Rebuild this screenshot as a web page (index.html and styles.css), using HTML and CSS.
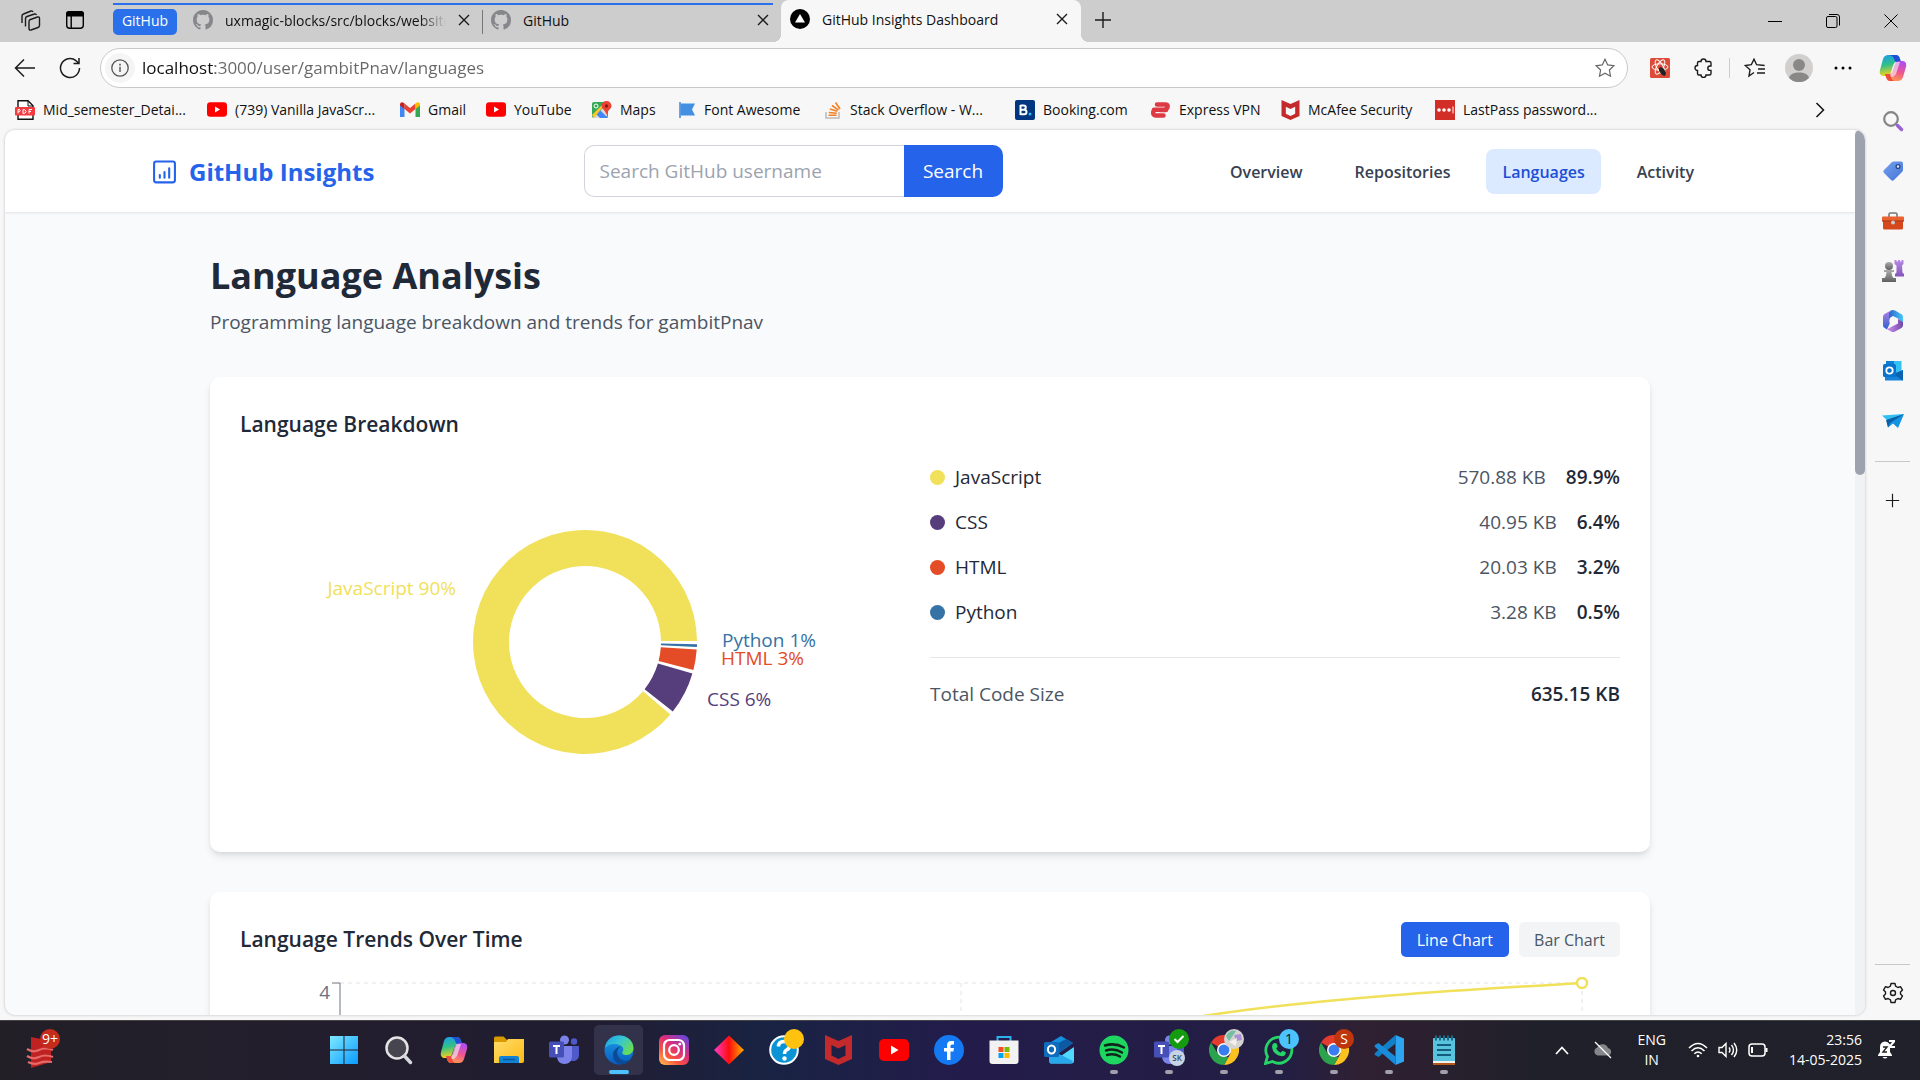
FILE: index.html
```html
<!DOCTYPE html>
<html lang="en">
<head>
<meta charset="utf-8">
<title>GitHub Insights Dashboard</title>
<link rel="stylesheet" href="styles.css">
</head>
<body>
<svg class="defs" width="0" height="0" aria-hidden="true">
  <defs>
    <linearGradient id="cpA" x1="0" y1="0" x2="0.2" y2="1"><stop offset="0" stop-color="#1c9bf0"/><stop offset=".5" stop-color="#2ec08a"/><stop offset="1" stop-color="#f3d21b"/></linearGradient>
    <linearGradient id="cpB" x1="0.6" y1="0" x2="0.3" y2="1"><stop offset="0" stop-color="#b04cf0"/><stop offset=".5" stop-color="#f0568f"/><stop offset="1" stop-color="#ffa04d"/></linearGradient>
    <linearGradient id="win" x1="0" y1="0" x2="1" y2="1"><stop offset="0" stop-color="#7de9ff"/><stop offset="1" stop-color="#0a9bff"/></linearGradient>
    <linearGradient id="fold" x1="0" y1="0" x2="1" y2="1"><stop offset="0" stop-color="#ffdc6b"/><stop offset="1" stop-color="#fdbb15"/></linearGradient>
    <linearGradient id="edgeA" x1="0" y1="0" x2="1" y2=".6"><stop offset="0" stop-color="#1f9de0"/><stop offset=".5" stop-color="#35c5d5"/><stop offset="1" stop-color="#66dd55"/></linearGradient>
    <linearGradient id="edgeB" x1="0" y1="0" x2="0" y2="1"><stop offset="0" stop-color="#1b9ce4"/><stop offset="1" stop-color="#0a5cc0"/></linearGradient>
    <linearGradient id="insta" x1="0" y1="1" x2=".8" y2="0"><stop offset="0" stop-color="#ffc850"/><stop offset=".35" stop-color="#f9533f"/><stop offset=".65" stop-color="#d82d7e"/><stop offset="1" stop-color="#6f45d8"/></linearGradient>
    <linearGradient id="dia" x1="0" y1="0" x2="1" y2="0"><stop offset="0" stop-color="#ff3ccf"/><stop offset=".5" stop-color="#ff0d0d"/><stop offset="1" stop-color="#ffb000"/></linearGradient>
    <linearGradient id="tag" x1="0" y1="0" x2="1" y2="1"><stop offset="0" stop-color="#74a2ee"/><stop offset="1" stop-color="#4472d6"/></linearGradient>
    <linearGradient id="rook" x1="0" y1="0" x2="0" y2="1"><stop offset="0" stop-color="#b98be8"/><stop offset="1" stop-color="#8255b8"/></linearGradient>
    <linearGradient id="pawn" x1="0" y1="0" x2="0" y2="1"><stop offset="0" stop-color="#adadad"/><stop offset="1" stop-color="#5f5f5f"/></linearGradient>
    <linearGradient id="mA" x1="0" y1="0" x2="0" y2="1"><stop offset="0" stop-color="#b77fe6"/><stop offset="1" stop-color="#2c62d0"/></linearGradient>
    <linearGradient id="mB" x1="0" y1="0" x2="1" y2="0"><stop offset="0" stop-color="#2f64cc"/><stop offset="1" stop-color="#45c8f5"/></linearGradient>
    <linearGradient id="mC" x1="0" y1="0" x2="1" y2="0"><stop offset="0" stop-color="#cf92ee"/><stop offset="1" stop-color="#7048a8"/></linearGradient>
    <symbol id="github" viewBox="0 0 16 16"><path fill="#85878a" d="M8 0C3.58 0 0 3.58 0 8c0 3.54 2.29 6.53 5.47 7.59.4.07.55-.17.55-.38 0-.19-.01-.82-.01-1.49-2.01.37-2.53-.49-2.69-.94-.09-.23-.48-.94-.82-1.13-.28-.15-.68-.52-.01-.53.63-.01 1.08.58 1.23.82.72 1.21 1.87.87 2.33.66.07-.52.28-.87.51-1.07-1.78-.2-3.64-.89-3.64-3.95 0-.87.31-1.59.82-2.15-.08-.2-.36-1.02.08-2.12 0 0 .67-.21 2.2.82.64-.18 1.32-.27 2-.27s1.36.09 2 .27c1.53-1.04 2.2-.82 2.2-.82.44 1.1.16 1.92.08 2.12.51.56.82 1.27.82 2.15 0 3.07-1.87 3.75-3.65 3.95.29.25.54.73.54 1.48 0 1.07-.01 1.93-.01 2.2 0 .21.15.46.55.38A8.01 8.01 0 0 0 16 8c0-4.42-3.58-8-8-8z"/></symbol>
    <symbol id="close" viewBox="0 0 12 12"><path d="M1 1l10 10M11 1L1 11" stroke="#1b1b1b" stroke-width="1.4" fill="none"/></symbol>
    <symbol id="plus" viewBox="0 0 18 18"><path d="M9 1v16M1 9h16" stroke="#1b1b1b" stroke-width="1.4" fill="none"/></symbol>
    <symbol id="youtube" viewBox="0 0 30 22"><rect width="30" height="22" rx="5" fill="#f00"/><path d="M12 6.500v9l7.500-4.500z" fill="#fff"/></symbol>
    <symbol id="copilot" viewBox="0 0 28 28"><path d="M9 1h8c2 0 3 1 4 4l1 3h-4c-2 0-3 1-4 4l-2 6c-1 3-2 4-4 4H5c-3 0-5-2-4-6L4 5c1-3 3-4 5-4z" fill="url(#cpA)"/><path d="M10 1h7c2 0 3 1 4 4l1 3h-5c-1 0-2-4-3-5s-2-2-4-2z" fill="#2050d8"/><path d="M19 27h-8c-2 0-3-1-4-4l-1-3h4c2 0 3-1 4-4l2-6c1-2 2-3 4-3h3c3 0 5 2 4 6l-3 10c-1 3-3 4-5 4z" fill="url(#cpB)"/><path d="M14 12l2-4h5l-4 12-3 3h-5c2-1 3-3 5-11z" fill="#f4eaf6" opacity=".65"/><path d="M6 20h5c1 3 2 7 5 7h-5c-3 0-4-4-5-7z" fill="#ee4c3d"/></symbol>
    <symbol id="mcafee" viewBox="0 0 27 30"><path d="M0 0l13.500 6L27 0v24l-13.500 6L0 24zM6.500 10v10.500l7 3.500 7-3.500V10l-7 3.500z" fill="#c42a2b" fill-rule="evenodd"/></symbol>
    <symbol id="teams" viewBox="0 0 30 30"><circle cx="15.500" cy="5" r="4.500" fill="#7b83eb"/><circle cx="25" cy="6.500" r="3.200" fill="#5059c9"/><path d="M20 11h9c.6 0 1 .4 1 1v8c0 4-3 6-6 6s-5-2-5-5z" fill="#5059c9"/><path d="M8 11h14c.6 0 1 .4 1 1v9c0 5-3 8-7.500 8S8 26 8 21z" fill="#7b83eb"/><rect y="6.500" width="15" height="16" rx="1.500" fill="#464eb8"/><path d="M4 11h7M7.500 11v8" stroke="#fff" stroke-width="2" fill="none"/></symbol>
    <symbol id="outlook" viewBox="0 0 30 30"><path d="M7 7l10-6 12 7-14 10-8-4z" fill="#1490df"/><path d="M11 10l11-6 7 4-16 11z" fill="#0c59a4"/><path d="M30 9v17c0 1.500-1 2.500-2.500 2.500H6L30 12z" fill="#50d9ff"/><path d="M5 14l24 12c-.5 1.500-1 2.500-2.500 2.500H7c-1 0-2-1-2-2z" fill="#28a8ea"/><rect y="7" width="15" height="15" rx="1.500" fill="#0f6cbd"/><ellipse cx="7.500" cy="14.500" rx="3.600" ry="4" stroke="#fff" stroke-width="2" fill="none"/></symbol>
    <symbol id="chrome" viewBox="0 0 30 30"><path d="M15 15L2 7.500A15 15 0 0 1 28 7.500L28.300 8H15z" fill="#e33b2e"/><path d="M28 7.500A15 15 0 0 1 15 30L21.500 18.500 15 8h13.300z" fill="#fcc21f"/><path d="M15 30A15 15 0 0 1 2 7.500L8.700 18.500 15 22h4.500z" fill="#2ba24c"/><circle cx="15" cy="15" r="7" fill="#fff"/><circle cx="15" cy="15" r="5.500" fill="#3a7df0"/></symbol>
    <symbol id="avatar" viewBox="0 0 28 28"><circle cx="14" cy="14" r="14" fill="#d2d0ce"/><circle cx="14" cy="11" r="6" fill="#8a8886"/><path d="M4 24c1-4 5-5.500 10-5.500S23 20 24 24a14 14 0 0 1-20 0z" fill="#8a8886"/></symbol>
  </defs>
</svg>

<header class="tabbar">
  <button class="icon-btn" aria-label="Workspaces"><svg width="22" height="22" viewBox="0 0 22 22" fill="none" stroke="#1b1b1b" stroke-width="1.400"><path d="M2 14V7q0-1.500 1.500-2L11 2q1.500-.4 2 1M5.500 17.500V9.500q0-1.500 1.500-2L14.500 5q1.500-.4 2 1"/><path d="M9 12.500q0-1.500 1.500-2l7-2.500q2-.5 2 1.500v7q0 1.500-1.500 2l-7 2.500q-2 .5-2-1.500z"/></svg></button>
  <button class="icon-btn" aria-label="Tab actions"><svg width="20" height="20" viewBox="0 0 20 20"><rect x="1.700" y="1.700" width="16.600" height="16.600" rx="3" fill="none" stroke="#000" stroke-width="1.400"/><path d="M1 6.500V4q0-3 3-3h12q3 0 3 3v2.500zM5.500 6h1.400v12.500H5.500z"/></svg></button>
  <div class="tab-group">
    <span class="group-name">GitHub</span>
    <div class="tab tab-first"><svg width="20" height="20"><use href="#github"/></svg><span class="tab-title fade">uxmagic-blocks/src/blocks/website</span><button aria-label="Close tab"><svg width="12" height="12"><use href="#close"/></svg></button></div>
    <div class="tab tab-second"><svg width="20" height="20"><use href="#github"/></svg><span class="tab-title">GitHub</span><button aria-label="Close tab"><svg width="12" height="12"><use href="#close"/></svg></button></div>
  </div>
  <div class="tab tab-active"><svg width="20" height="20" viewBox="0 0 20 20"><circle cx="10" cy="10" r="10"/><path d="M10 5l5 8.500H5z" fill="#fff"/></svg><span class="tab-title">GitHub Insights Dashboard</span><button aria-label="Close tab"><svg width="12" height="12"><use href="#close"/></svg></button></div>
  <button class="new-tab" aria-label="New tab"><svg width="18" height="18"><use href="#plus"/></svg></button>
  <div class="window-controls">
    <button aria-label="Minimize"><svg width="14" height="14" viewBox="0 0 14 14"><path d="M0 7.500h14" stroke="#000"/></svg></button>
    <button aria-label="Restore"><svg width="14" height="14" viewBox="0 0 14 14" fill="none" stroke="#000"><rect x=".5" y="2.500" width="10.500" height="11" rx="1.500"/><path d="M3 .5h8q2.500 0 2.500 2.500v8.500"/></svg></button>
    <button aria-label="Close"><svg width="14" height="14" viewBox="0 0 14 14"><path d="M.5.500l13 13M13.500.500l-13 13" stroke="#000"/></svg></button>
  </div>
</header>

<div class="toolbar">
  <button aria-label="Back"><svg width="22" height="22" viewBox="0 0 22 22" fill="none" stroke="#1b1b1b" stroke-width="1.500"><path d="M21 11H2M10 2.500L1.500 11l8.500 8.500"/></svg></button>
  <button aria-label="Refresh"><svg width="22" height="22" viewBox="0 0 22 22" fill="none" stroke="#1b1b1b" stroke-width="1.500"><path d="M20.500 11a9.500 9.500 0 1 1-3.500-7.300L19.500 6M20 1v5.500h-5.500"/></svg></button>
  <div class="address">
    <span class="info"><svg width="18" height="18" viewBox="0 0 18 18"><circle cx="9" cy="9" r="8.200" fill="none" stroke="#555" stroke-width="1.300"/><path d="M8.300 7.800h1.400V13H8.300zM8.200 4.800h1.600v1.600H8.200z" fill="#555"/></svg></span>
    <input class="url" aria-label="Address" value="localhost:3000/user/gambitPnav/languages">
    <button aria-label="Add to favorites"><svg width="20" height="20" viewBox="0 0 20 20"><path d="M10 1.200l2.700 5.700 6.200.8-4.500 4.300 1.100 6.200L10 15.200l-5.500 3 1.100-6.200L1.100 7.700l6.200-.8z" fill="none" stroke="#666" stroke-width="1.200"/></svg></button>
  </div>
  <div class="tools">
    <button aria-label="React tools"><svg width="20" height="20" viewBox="0 0 20 20"><rect width="20" height="20" rx="1.500" fill="#dc4a38"/><g fill="none" stroke="#fff" stroke-width="1"><ellipse cx="10" cy="9" rx="8" ry="3.200"/><ellipse cx="10" cy="9" rx="8" ry="3.200" transform="rotate(60 10 9)"/><ellipse cx="10" cy="9" rx="8" ry="3.200" transform="rotate(120 10 9)"/></g><path d="M9 10l2-1 3 2 2 4-1 3-3-1-3-4z" fill="#222"/></svg></button>
    <button aria-label="Extensions"><svg width="20" height="20" viewBox="0 0 20 20"><path d="M7 3.500a2.500 2.500 0 0 1 5 0h3.500q1.500 0 1.500 1.500v3h-1a2.200 2.200 0 0 0 0 4.400h1V15.500q0 1.500-1.500 1.500H12a2.500 2.500 0 0 1-5 0H5q-1.500 0-1.500-1.500V12.500a2.500 2.500 0 0 1 0-5V5q0-1.500 1.500-1.500z" fill="none" stroke="#1b1b1b" stroke-width="1.400"/></svg></button>
    <span class="sep"></span>
    <button aria-label="Favorites"><svg width="22" height="20" viewBox="0 0 22 20" fill="none" stroke="#1b1b1b" stroke-width="1.400"><path d="M10 14.500l-5 3.500 1-6.200L1.200 7.500l6.100-.8L10 1.200l2.600 5.500 8 .8M14 11h7M13 15h8"/></svg></button>
    <button aria-label="Profile"><svg width="28" height="28"><use href="#avatar"/></svg></button>
    <button aria-label="Settings and more"><svg width="18" height="4" viewBox="0 0 18 4"><circle cx="2" cy="2" r="1.500"/><circle cx="9" cy="2" r="1.500"/><circle cx="16" cy="2" r="1.500"/></svg></button>
  </div>
  <button class="copilot-btn" aria-label="Copilot"><svg width="28" height="28"><use href="#copilot"/></svg></button>
</div>

<div class="browser-body">
  <div class="browser-left">
    <nav class="bookmarks" aria-label="Bookmarks">
      <a href="#"><svg width="20" height="20" viewBox="0 0 20 20"><path d="M4 .7h9l5 5v13.600H3V.7z" fill="#fff" stroke="#111" stroke-width="1.400"/><path d="M13 1v5h5" fill="none" stroke="#111"/><rect y="7" width="20" height="8.500" rx="1" fill="#f33b3f"/><path d="M3 13.500v-4h1.500q1.200 1.200 0 2.300H3M8 9.500v4q3 0 3-2t-3-2M14 13.500v-4h3M14 11.500h2" fill="none" stroke="#fff"/></svg>Mid_semester_Detai...</a>
      <a href="#"><svg width="20" height="15"><use href="#youtube"/></svg>(739) Vanilla JavaScr...</a>
      <a href="#"><svg width="20" height="15" viewBox="0 0 20 15"><path d="M0 2v13h4.500V6z" fill="#4285f4"/><path d="M20 2v13h-4.500V6z" fill="#34a853"/><path d="M4.500 1.500L10 6l5.500-4.500V7L10 11.500 4.500 7z" fill="#ea4335"/><path d="M0 2q1-3 4.500-.5V7L0 3.500z" fill="#c5221f"/><path d="M20 2q-1-3-4.500-.5V7L20 3.500z" fill="#fbbc04"/></svg>Gmail</a>
      <a href="#"><svg width="20" height="15"><use href="#youtube"/></svg>YouTube</a>
      <a href="#"><svg width="20" height="18" viewBox="0 0 20 18"><rect y="1" width="16" height="16" rx="2" fill="#34a853"/><path d="M1 17L15 3v12l-2 2z" fill="#d8dbdf"/><path d="M8 9l8 8h-8L4 13z" fill="#4285f4"/><path d="M0 14L13 1h2L2 17z" fill="#fbc72d"/><circle cx="4" cy="5" r="2" fill="none" stroke="#fff"/><path d="M14.500 0A5 5 0 0 1 19.500 5c0 3-4 4-5 9-1-5-5-6-5-9a5 5 0 0 1 5-5z" fill="#ea4335"/><circle cx="14.500" cy="5" r="1.700" fill="#8b1a11"/></svg>Maps</a>
      <a href="#"><svg width="18" height="18" viewBox="0 0 18 18"><path d="M2.500 2.500H17l-3 6 3 6H2.500z" fill="#4390e2"/><path d="M2 1v16" stroke="#4390e2" stroke-width="1.600"/></svg>Font Awesome</a>
      <a href="#"><svg width="17" height="18" viewBox="0 0 17 18" fill="none"><path d="M1 11v6h13v-6" stroke="#bbb" stroke-width="1.500"/><path d="M3.500 14.300h8M3.800 11.500l8 .8M4.800 8l7.500 2.300M7 4.500l6.500 4.700M10.500 1.500l4.500 6.500" stroke="#f48024" stroke-width="1.600"/></svg>Stack Overflow - W...</a>
      <a href="#"><svg width="20" height="20" viewBox="0 0 20 20"><rect width="20" height="20" rx="2" fill="#013580"/><path d="M5.500 5v10M5.500 5.500h3.200a2 2 0 0 1 0 4.200H5.500M5.500 9.700h3.700a2.300 2.300 0 0 1 0 4.600H5.500" fill="none" stroke="#fff" stroke-width="2"/><circle cx="15" cy="14" r="1.500" fill="#31b7f3"/></svg>Booking.com</a>
      <a href="#"><svg width="20" height="16" viewBox="0 0 20 16" fill="none" stroke="#dd3a44" stroke-width="4.500" stroke-linecap="round"><path d="M6 2.500h9q2 0 1.500 2.500T13 7.800H3M9 8h6M2.500 9q-1 4.500 2 4.500h8"/></svg>Express VPN</a>
      <a href="#"><svg width="19" height="20"><use href="#mcafee"/></svg>McAfee Security</a>
      <a href="#"><svg width="20" height="20" viewBox="0 0 20 20"><rect width="20" height="20" fill="#d32d27"/><g fill="#fff"><circle cx="4" cy="10" r="1.800"/><circle cx="9" cy="10" r="1.800"/><circle cx="14" cy="10" r="1.800"/><path d="M17.500 6.500h1v7h-1z"/></g></svg>LastPass password...</a>
      <button class="more" aria-label="More bookmarks"><svg width="10" height="16" viewBox="0 0 10 16"><path d="M1.500 1l7 7-7 7" fill="none" stroke="#111" stroke-width="1.500"/></svg></button>
    </nav>

    <div class="viewport">
      <div class="page">
        <div class="site-header">
          <div class="site-header-inner">
            <a class="brand" href="#"><svg width="25" height="25" viewBox="0 0 24 24" fill="none" stroke="#2563eb" stroke-width="2" stroke-linecap="round"><rect x="2" y="1.500" width="20" height="20" rx="2"/><path d="M7.500 17v-2.500M12 17v-5.500M16.500 17V8"/></svg>GitHub Insights</a>
            <form class="search" onsubmit="return false"><input type="text" aria-label="GitHub username" placeholder="Search GitHub username"><button>Search</button></form>
            <nav class="site-nav"><a href="#">Overview</a><a href="#">Repositories</a><a class="current" href="#">Languages</a><a href="#">Activity</a></nav>
          </div>
        </div>

        <main class="content">
          <div class="intro">
            <h1>Language Analysis</h1>
            <p>Programming language breakdown and trends for gambitPnav</p>
          </div>

          <section class="card">
            <h2>Language Breakdown</h2>
            <div class="breakdown">
              <svg class="donut" viewBox="-345 -180 690 360" role="img" aria-label="Language share">
                <path fill="#f1e05a" d="M112 -1A112 112 0 1 0 85.400 72.400L58 49.200A76 76 0 1 1 76 -1z"/>
                <path fill="#563d7c" d="M87.800 69.600A112 112 0 0 0 107.400 31.600L72.900 21.500A76 76 0 0 1 59.600 47.200z"/>
                <path fill="#e34c26" d="M108.400 28A112 112 0 0 0 111.700 7.600L75.800 5.200A76 76 0 0 1 73.600 19z"/>
                <path fill="#3572a5" d="M111.900 4.900L112 2.300L76 1.600L75.900 3.300z"/>
                <text x="-129" y="-47" text-anchor="end" fill="#f1e05a">JavaScript 90%</text>
                <text x="122" y="64" fill="#563d7c">CSS 6%</text>
                <text x="136" y="23" fill="#e34c26">HTML 3%</text>
                <text x="137" y="5" fill="#3572a5">Python 1%</text>
              </svg>
              <div class="stats">
                <ul>
                  <li><i class="dot js"></i><span class="name">JavaScript</span><span class="size">570.88 KB</span><strong>89.9%</strong></li>
                  <li><i class="dot css"></i><span class="name">CSS</span><span class="size">40.95 KB</span><strong>6.4%</strong></li>
                  <li><i class="dot html"></i><span class="name">HTML</span><span class="size">20.03 KB</span><strong>3.2%</strong></li>
                  <li><i class="dot py"></i><span class="name">Python</span><span class="size">3.28 KB</span><strong>0.5%</strong></li>
                </ul>
                <p class="total"><span>Total Code Size</span><strong>635.15 KB</strong></p>
              </div>
            </div>
          </section>

          <section class="card">
            <div class="card-head">
              <h2>Language Trends Over Time</h2>
              <div class="toggle"><button class="on">Line Chart</button><button>Bar Chart</button></div>
            </div>
            <svg class="trend" viewBox="0 0 1380 375" role="img" aria-label="Language trends">
              <path d="M100 6H1342M721 6V340M1342 6V340" stroke="#e2e2e2" stroke-dasharray="4 4" fill="none"/>
              <path d="M92 6h8V340" stroke="#6b7280" fill="none"/>
              <text x="90" y="22" text-anchor="end" fill="#6b7280">4</text>
              <path d="M721 110C830 68 910 47 970 38C1090 20 1240 12 1342 6" stroke="#f1e05a" stroke-width="2.500" fill="none"/>
              <circle cx="1342" cy="6" r="5" fill="#fff" stroke="#f1e05a" stroke-width="2.500"/>
            </svg>
          </section>
        </main>
      </div>
      <div class="scrollbar"><div class="thumb"></div></div>
    </div>
  </div>

  <aside class="sidebar">
    <button aria-label="Search"><svg width="22" height="22" viewBox="0 0 22 22" fill="none"><circle cx="9" cy="9" r="6.800" stroke="#858585" stroke-width="2.200"/><path d="M14 14l2 2" stroke="#858585" stroke-width="2"/><path d="M15.500 15.500l4 4" stroke="#9a63d4" stroke-width="3.500" stroke-linecap="round"/></svg></button>
    <button aria-label="Shopping"><svg width="22" height="22" viewBox="0 0 22 22"><path d="M12 1.500h7q2 0 2 2v6q0 1.500-1 2.500l-8 8q-1.500 1.500-3 0l-7-7q-1.500-1.500 0-3l8-8q1-.5 2-.5z" fill="url(#tag)"/><circle cx="16" cy="6.500" r="1.900" fill="#dce6fa" stroke="#2b468c" stroke-width="1.300"/></svg></button>
    <button aria-label="Tools"><svg width="22" height="18" viewBox="0 0 22 18"><path d="M7 5V2.500q0-1.500 1.500-1.500h5q1.500 0 1.500 1.500V5" fill="none" stroke="#777" stroke-width="1.600"/><path d="M1 9h20v7q0 1.500-1.500 1.500h-17Q1 17.500 1 16z" fill="#d5481c"/><rect y="4.500" width="22" height="5" rx="1" fill="#e9622f"/><path d="M0 9h22" stroke="#a62c0d"/><circle cx="11" cy="10.500" r="2" fill="#ccc"/></svg></button>
    <button aria-label="Games"><svg width="22" height="24" viewBox="0 0 22 24"><circle cx="7" cy="7" r="4" fill="url(#pawn)"/><path d="M2 11h10v2H9.500q0 4 2 6H14v4H0v-4h2.500q2-2 2-6H2z" fill="url(#pawn)"/><path d="M12.500 1h2v1.500h1.500V1h2v1.500h1.500V1h2v4l-1.500 1.500.5 7 1.500 1.500v2.500h-9V15l1.500-1.500V6.500L12.500 5z" fill="url(#rook)"/></svg></button>
    <button aria-label="Microsoft 365"><svg width="22" height="22" viewBox="0 0 22 22"><path d="M11 0L8 6v7l-3 6.500L2 17.500Q1 17 1 15V7q0-2 1.500-3L8 1z" fill="url(#mA)"/><path d="M9 .500q2-1 4 0l6.500 3.800Q21 5 21 7v6l-5-4.500L11 6 7 8.500V3z" fill="url(#mB)"/><path d="M21 12v3q0 2-1.500 3L13 21.500q-2 1-4 0l-4-2.300L11 16l5-2.500V9z" fill="url(#mC)"/><circle cx="11" cy="11" r="3.700" fill="#f7f7f7"/></svg></button>
    <button aria-label="Outlook"><svg width="22" height="22" viewBox="0 0 22 22"><path d="M4 1h15.500v13H4z" fill="#35c0f3"/><path d="M4 1h8v6H4z" fill="#0f7fd3"/><path d="M3 20.500h18V10l-8 5-10-3z" fill="#1683d8"/><path d="M21 20.500L11 14l10-4z" fill="#0a62b0"/><rect x="1" y="4" width="13" height="13" rx="1.500" fill="#0873cf"/><circle cx="7.500" cy="10.500" r="3.200" fill="none" stroke="#fff" stroke-width="1.800"/></svg></button>
    <button aria-label="Drop"><svg width="22" height="16" viewBox="0 0 22 16"><path d="M0 2.500L22 1 7 9z" fill="#33bff0"/><path d="M22 1L16 15l-5-4.500-5 4-1-6.500z" fill="#1493e3"/><path d="M22 1L8 10l-2 4.500L4 7z" fill="#0b5ea8"/></svg></button>
    <hr>
    <button aria-label="Customize"><svg width="15" height="15"><use href="#plus"/></svg></button>
    <hr class="bottom">
    <button class="gear" aria-label="Settings"><svg width="22" height="22" viewBox="0 0 22 22" fill="none" stroke="#1b1b1b" stroke-width="1.400" stroke-linejoin="round"><path d="M9 1.500h4l.6 2.700 2.300 1.300 2.600-.9 2 3.500-2 1.900v2l2 1.900-2 3.500-2.600-.9-2.300 1.300-.6 2.700H9l-.6-2.700-2.300-1.300-2.600.9-2-3.500 2-1.900v-2l-2-1.900 2-3.500 2.600.9 2.300-1.300z"/><circle cx="11" cy="11" r="2.500"/></svg></button>
  </aside>
</div>

<footer class="taskbar">
  <button class="widget" aria-label="Widgets"><svg width="32" height="38" viewBox="0 0 32 38"><path d="M5 6l20 4v21L5 37z" fill="#c02222"/><path d="M1 18q6 4 12 1t14 0M1 25q6 4 12 1t14 0M2 31q6 3 11 1t13-1" stroke="#e56a6a" stroke-width="2.200" fill="none"/></svg><span class="badge red">9+</span></button>
  <div class="apps">
    <button aria-label="Start"><svg width="30" height="30" viewBox="0 0 30 30" fill="url(#win)"><path d="M1 1h13.500v13.500H1zM15.500 1H29v13.500H15.500zM1 15.500h13.500V29H1zM15.500 15.500H29V29H15.500z"/></svg></button>
    <button aria-label="Search"><svg width="30" height="30" viewBox="0 0 30 30"><circle cx="13" cy="13" r="10.500" fill="#474650" stroke="#e4e4e4" stroke-width="2.500"/><path d="M20.500 21l6 6.500" stroke="#d5d8dc" stroke-width="3.500" stroke-linecap="round"/></svg></button>
    <button aria-label="Copilot"><svg width="28" height="28"><use href="#copilot"/></svg></button>
    <button aria-label="File Explorer"><svg width="30" height="28" viewBox="0 0 30 28"><path d="M0 2q0-1.500 1.500-1.500h8L13 4v6H0z" fill="#d99a00"/><path d="M0 6h12l2-3h16v22q0 2-2 2H0z" fill="url(#fold)"/><path d="M5 27v-5q0-2 2-2h16q2 0 2 2v5z" fill="#1183d6"/><path d="M9 23.500h12" stroke="#0a549a" stroke-width="1.500"/></svg></button>
    <button aria-label="Teams"><svg width="30" height="30"><use href="#teams"/></svg></button>
    <button class="active" aria-label="Edge"><svg width="30" height="30" viewBox="0 0 30 30"><circle cx="15" cy="15" r="14.500" fill="url(#edgeB)"/><path d="M1 13C2 5 8 .500 15 .500c9 0 14.500 6 14.500 12.500 0 4-3 7-7 7-3 0-5-1-4-3 1.500-2 1-4.500-1-6C13 8 5 8 1 13z" fill="url(#edgeA)"/><path d="M17 11.500q-5 3-3.500 8T21 26q4 0 7-3-4 6-11 6.500Q9 28 9 20q0-7 8-8.500z" fill="#0b4b96"/></svg></button>
    <button aria-label="Instagram"><svg width="30" height="30" viewBox="0 0 30 30"><rect width="30" height="30" rx="6" fill="url(#insta)"/><g fill="none" stroke="#fff" stroke-width="2.200"><rect x="5" y="5" width="20" height="20" rx="5.500"/><circle cx="15" cy="15" r="4.800"/></g><circle cx="20.800" cy="9.200" r="1.400" fill="#fff"/></svg></button>
    <button aria-label="Diamond"><svg width="30" height="30" viewBox="0 0 30 30"><path d="M15 .500L30 15 15 29.500 0 15z" fill="url(#dia)"/></svg></button>
    <button aria-label="Help"><svg width="30" height="30" viewBox="0 0 30 30"><circle cx="15" cy="15" r="13.800" fill="#0a94d6" stroke="#fff" stroke-width="2"/><path d="M9.500 11.500q0-5 5.500-5t5.500 4.500q0 2.500-3 4-2 1-2 4" fill="none" stroke="#fff" stroke-width="3.500"/><circle cx="15.500" cy="23.500" r="2.200" fill="#fff"/></svg><span class="badge amber"></span></button>
    <button aria-label="McAfee"><svg width="27" height="30"><use href="#mcafee"/></svg></button>
    <button aria-label="YouTube"><svg width="30" height="22"><use href="#youtube"/></svg></button>
    <button aria-label="Facebook"><svg width="30" height="30" viewBox="0 0 30 30"><circle cx="15" cy="15" r="15" fill="#1479f2"/><path d="M13 25v-8.500h-3V13h3v-2.500Q13 6 17 6h3v3.500h-2q-1.500 0-1.500 1.500v2h3.500l-.6 3.500h-2.900V25z" fill="#fff"/></svg></button>
    <button aria-label="Microsoft Store"><svg width="30" height="30" viewBox="0 0 30 30"><path d="M8.500 6V2h13v4" fill="none" stroke="#2db1e8" stroke-width="2"/><path d="M.500 5.500h29V26q0 3-3 3h-23q-3 0-3-3z" fill="#f2f2f2"/><path fill="#f25022" d="M9.500 12h5v5h-5z"/><path fill="#7fba00" d="M15.500 12h5v5h-5z"/><path fill="#00a4ef" d="M9.500 18h5v5h-5z"/><path fill="#ffb900" d="M15.500 18h5v5h-5z"/></svg></button>
    <button aria-label="Outlook"><svg width="30" height="30"><use href="#outlook"/></svg></button>
    <button class="running" aria-label="Spotify"><svg width="30" height="30" viewBox="0 0 30 30"><circle cx="15" cy="15" r="14.500" fill="#1ed760"/><path d="M6 10.500q10-3 19 2M7 15.500q8.500-2.500 16 2M8 20q7-2 13 1.500" stroke="#10251a" stroke-width="2.500" fill="none" stroke-linecap="round"/></svg></button>
    <button class="running" aria-label="Teams work"><svg width="30" height="30"><use href="#teams"/></svg><span class="badge green"><svg width="12" height="10" viewBox="0 0 12 10"><path d="M1.500 5l3 3 6-6" fill="none" stroke="#fff" stroke-width="2"/></svg></span><span class="initials">SK</span></button>
    <button class="running" aria-label="Chrome"><svg width="30" height="30"><use href="#chrome"/></svg><span class="badge"><svg width="20" height="20" viewBox="0 0 20 20"><circle cx="10" cy="10" r="10" fill="#d5d4d0"/><path d="M2 7q4-7 10-5l-7 10z" fill="#73bfa2"/><path d="M10 6l7-1 1 6-6 1z" fill="#ad91d7"/><path d="M5 13l8-4-1 8z" fill="#f2efed"/></svg></span></button>
    <button class="running" aria-label="WhatsApp"><svg width="30" height="30" viewBox="0 0 30 30"><path d="M1.500 28.500l2-7A13 13 0 1 1 8.500 26.500z" fill="none" stroke="#25d366" stroke-width="2.800"/><path d="M10 8l2.500.3 1.200 3.200-1.500 2q1.500 3 4.500 4.300l1.800-2 3.300 1.500q0 4-4 4Q9 20 8 12q0-3 2-4z" fill="#25d366"/></svg><span class="badge sky">1</span></button>
    <button class="running" aria-label="Chrome profile"><svg width="30" height="30"><use href="#chrome"/></svg><span class="badge rust">S</span></button>
    <button class="running" aria-label="VS Code"><svg width="30" height="30" viewBox="0 0 30 30"><path d="M21.500 0L30 3.500v23L21.500 30z" fill="#2ea5f0"/><path d="M21.500 0v8.500L4.500 22 1 20q-1-1 0-2z" fill="#1280c9"/><path d="M21.500 30v-8.500L4.500 8 1 10q-1 1 0 2z" fill="#1a8bd8"/></svg></button>
    <button class="running" aria-label="Notepad"><svg width="24" height="30" viewBox="0 0 24 30"><path d="M1 26h22v4H1z" fill="#b35a1b"/><rect x="1" y="3" width="22" height="24.500" rx="1" fill="#57c3dd"/><path d="M1 26h22v2H1z" fill="#f1f1f1"/><path d="M5 10h14M5 15h14M5 20h14" stroke="#135c7c" stroke-width="2"/><path d="M4 .500v5M8 .500v5M12 .500v5M16 .500v5M20 .500v5" stroke="#1b6a88" stroke-width="2"/></svg></button>
  </div>
  <div class="tray">
    <button aria-label="Hidden icons"><svg width="14" height="9" viewBox="0 0 14 9"><path d="M1 8l6-6.500L13 8" fill="none" stroke="#fff" stroke-width="1.700"/></svg></button>
    <button class="cloud" aria-label="OneDrive"><svg width="20" height="18" viewBox="0 0 20 18"><path d="M4.500 14.500a4.200 4.200 0 0 1-.3-8A6 6 0 0 1 15 7a3.900 3.900 0 0 1 .5 7.500z" fill="#85858b"/><path d="M2 1l16 16" stroke="#fff" stroke-width="1.300"/></svg></button>
    <button class="lang">ENG<br>IN</button>
    <button class="status" aria-label="Network, sound and battery">
      <svg width="20" height="16" viewBox="0 0 20 16" fill="none" stroke="#fff" stroke-width="1.500"><path d="M1 6q9-9 18 0M3.500 9q6.500-6.500 13 0M6.300 11.800q3.700-3.500 7.400 0"/><circle cx="10" cy="14" r="1.300" fill="#fff" stroke="none"/></svg>
      <svg width="20" height="16" viewBox="0 0 20 16" fill="none" stroke="#fff" stroke-width="1.400"><path d="M1 5.500h3l4-4v13l-4-4H1zM11 5.500q2 2.500 0 5M13.500 3q4 5 0 10M16 1q5.500 7 0 14"/></svg>
      <svg width="20" height="14" viewBox="0 0 20 14" fill="none" stroke="#fff" stroke-width="1.500"><rect x="1" y="1" width="16" height="12" rx="3"/><path d="M4 4v6M18.500 5v4" stroke-width="2"/></svg>
    </button>
    <button class="clock">23:56<br>14-05-2025</button>
    <button aria-label="Notifications"><svg width="20" height="20" viewBox="0 0 20 20"><path d="M2 15l2-3V7q0-5 5-5.500 3 0 5 3V12l2 3v1H2zM6.500 17h5q-2.500 3-5 0z" fill="#fff"/><path d="M13 0h6v2l-3.500 4H19v2h-6V6l3-4h-3z" fill="#fff"/><path d="M7 7h4l-4 5h4" fill="none" stroke="#222" stroke-width="1.400"/></svg></button>
  </div>
</footer>
</body>
</html>
```
FILE: styles.css
```css
* { box-sizing: border-box; }
body {
  margin: 0;
  height: 100vh;
  display: flex;
  flex-direction: column;
  overflow: hidden;
  background: #f7f7f7;
  color: #111;
  font-family: "Open Sans", "Noto Sans", sans-serif;
  font-size: 14px;
}
.defs { position: absolute; }
button {
  border: 0;
  padding: 0;
  background: none;
  font: inherit;
  color: inherit;
  display: flex;
  align-items: center;
  justify-content: center;
}
a { color: inherit; text-decoration: none; }
svg { display: block; flex: none; }
h1, h2, p, ul { margin: 0; padding: 0; }

/* Tab strip */
.tabbar { display: flex; height: 42px; flex: none; background: #cdcdcd; padding-left: 9px; }
.icon-btn { width: 44px; height: 40px; }
.tab-group {
  display: flex;
  align-items: center;
  width: 660px;
  margin: 3px 8px 0 16px;
  border-top: 2px solid #2a70ea;
  height: 36px;
}
.group-name {
  width: 64px;
  height: 26px;
  line-height: 24px;
  border-radius: 5px;
  background: #2a70ea;
  color: #fff;
  text-align: center;
}
.tab { display: flex; align-items: center; gap: 12px; }
.tab-title { flex: 1; min-width: 0; white-space: nowrap; overflow: hidden; }
.fade { mask-image: linear-gradient(90deg, #000 88%, transparent); }
.tab-first { width: 306px; padding: 0 12px 4px 16px; border-right: 1px solid #777; }
.tab-second { flex: 1; padding: 0 4px 4px 8px; }
.tab-active {
  position: relative;
  width: 300px;
  padding: 0 13px 4px 9px;
  background: #f7f7f7;
  border-radius: 8px 8px 0 0;
}
.tab-active::before, .tab-active::after {
  content: "";
  position: absolute;
  bottom: 0;
  width: 8px;
  height: 8px;
}
.tab-active::before { right: 100%; background: radial-gradient(circle at 0 0, #cdcdcd 8px, #f7f7f7 8px); }
.tab-active::after { left: 100%; background: radial-gradient(circle at 100% 0, #cdcdcd 8px, #f7f7f7 8px); }
.new-tab { width: 44px; height: 40px; }
.window-controls { display: flex; margin-left: auto; }
.window-controls button { width: 58px; }

/* Toolbar */
.toolbar { display: flex; align-items: center; height: 53px; flex: none; padding: 0 0 2px 2px; }
.toolbar > button { width: 45px; height: 40px; }
.address {
  flex: 1;
  display: flex;
  align-items: center;
  height: 40px;
  margin-left: 8px;
  padding: 0 12px 0 4px;
  border: 1px solid #c9c9c9;
  border-radius: 20px;
  background: #fff;
}
.info { display: grid; place-items: center; width: 30px; height: 30px; border-radius: 15px; background: #f5f5f5; }
.url {
  flex: 1;
  border: 0;
  outline: 0;
  padding: 0 0 0 7px;
  font: inherit;
  font-size: 17px;
  height: 30px;
  background: linear-gradient(90deg, #111 80px, #666 80px);
  background-clip: text;
  -webkit-text-fill-color: transparent;
}
.tools { display: flex; align-items: center; padding-left: 10px; }
.tools button { width: 44px; height: 40px; }
.sep { width: 1px; height: 20px; margin: 0 3px; background: #ccc; }
.toolbar > .copilot-btn { width: 55px; }

.browser-body { flex: 1; min-height: 0; display: flex; }
.browser-left { flex: 1; min-width: 0; display: flex; flex-direction: column; }

/* Bookmarks */
.bookmarks {
  display: grid;
  grid-template-columns: 192px 193px 86px 106px 86px 147px 190px 136px 130px 154px 200px 1fr;
  align-items: center;
  height: 35px;
  flex: none;
  padding: 0 40px 6px 15px;
}
.bookmarks a { display: flex; align-items: center; gap: 8px; white-space: nowrap; }
.more { justify-self: end; }

/* Web page area */
.viewport {
  flex: 1;
  min-height: 0;
  display: flex;
  margin: 0 0 5px 5px;
  border-radius: 10px;
  overflow: hidden;
  background: #f9fafb;
  box-shadow: 0 0 3px #bbb;
}
.page { flex: 1; min-width: 0; overflow: hidden; font-size: 19px; line-height: 30px; color: #1f2937; }
.scrollbar { width: 10px; background: #f1f2f4; }
.thumb { height: 39%; background: #9ca3af; border-radius: 5px; }
.site-header { background: #fff; border-bottom: 1px solid #e8eaed; box-shadow: 0 1px 2px #0000000d; }
.site-header-inner {
  max-width: 1600px;
  height: 82px;
  margin: 0 auto;
  padding: 0 20px 0 22px;
  display: flex;
  align-items: center;
  justify-content: space-between;
}
.brand { display: flex; align-items: center; gap: 12px; color: #2563eb; font-size: 24px; line-height: 30px; font-weight: 700; width: 220px; padding-top: 2px; white-space: nowrap; }
.search { display: flex; }
.search input {
  width: 320px;
  height: 52px;
  padding: 0 15px;
  border: 1px solid #d1d5db;
  border-right: 0;
  border-radius: 10px 0 0 10px;
  font: inherit;
  background: #fff;
}
.search input::placeholder { color: #9ca3af; }
.search button { width: 99px; height: 52px; border-radius: 0 10px 10px 0; background: #2563eb; color: #fff; }
.site-nav { display: flex; gap: 20px; }
.site-nav a { padding: 9px 16px 7px; border-radius: 8px; font-size: 16px; line-height: 29px; font-weight: 600; color: #374151; }
.site-nav .current { background: #dbeafe; color: #1d4ed8; }

.content { max-width: 1440px; margin: 0 auto; padding-top: 40px; display: flex; flex-direction: column; gap: 40px; }
.intro { display: flex; flex-direction: column; gap: 8px; }
h1 { font-size: 36px; line-height: 46px; font-weight: 700; }
.intro p { color: #4b5563; }
.card {
  padding: 30px;
  background: #fff;
  border-radius: 10px;
  box-shadow: 0 5px 8px -1px #0000001a, 0 2px 5px -2px #0000001a;
}
h2 { font-size: 21px; line-height: 35px; font-weight: 600; }
.breakdown { display: grid; grid-template-columns: 1fr 1fr; margin-top: 20px; }
.donut { width: 100%; font-size: 19px; }
.stats ul { list-style: none; display: flex; flex-direction: column; gap: 15px; }
.stats li { display: flex; align-items: center; }
.dot { width: 15px; height: 15px; border-radius: 50%; margin-right: 10px; }
.js { background: #f1e05a; }
.css { background: #563d7c; }
.html { background: #e34c26; }
.py { background: #3572a5; }
.name { flex: 1; }
.size { color: #4b5563; margin-right: 20px; }
strong { font-weight: 600; }
.total { display: flex; justify-content: space-between; margin-top: 30px; padding-top: 21px; border-top: 1px solid #e5e7eb; }
.total span { color: #4b5563; }
.card-head { display: flex; justify-content: space-between; align-items: center; }
.toggle { display: flex; gap: 10px; }
.toggle button { height: 35px; padding: 0 15px; border-radius: 5px; font-size: 16px; background: #f3f4f6; color: #4b5563; }
.toggle .on { background: #2563eb; color: #fff; padding: 0 16px; }
.trend { width: 100%; margin-top: 20px; font-size: 19px; }

/* Edge side rail */
.sidebar { width: 55px; flex: none; display: flex; flex-direction: column; align-items: center; padding-top: 1px; }
.sidebar button { width: 40px; height: 50px; }
.sidebar hr { width: 35px; margin: 15px 0 13px; border: 0; border-top: 1px solid #c8c8c8; }
.sidebar .bottom { margin: auto 0 0; }
.sidebar .gear { height: 55px; }

/* Windows taskbar */
.taskbar {
  display: flex;
  align-items: center;
  height: 60px;
  flex: none;
  border-top: 1px solid #444;
  padding-bottom: 1px;
  color: #fff;
  background: linear-gradient(90deg, #231f27, #211d32 31%, #192343 40%, #231c4b 50%, #231e43 67%, #302032 71%, #20202a 80%, #20212a);
}
.widget { position: relative; width: 84px; height: 50px; }
.apps { display: flex; margin-left: 232px; }
.apps button { position: relative; width: 49px; height: 50px; margin: 0 3px; border-radius: 5px; }
.active { background: #32324b; }
.active::after, .running::after {
  content: "";
  position: absolute;
  bottom: 1px;
  width: 8px;
  height: 4px;
  border-radius: 2px;
  background: #a19fab;
}
.active::after { width: 20px; background: #4cc2ff; }
.badge {
  position: absolute;
  top: 4px;
  right: 4px;
  width: 20px;
  height: 20px;
  border-radius: 10px;
  display: grid;
  place-items: center;
  font-size: 14px;
  line-height: 20px;
}
.red { background: #c42b1c; right: 24px; }
.amber { background: #ffc20e; }
.green { background: #159b10; }
.sky { background: #4cc2ff; color: #111; }
.rust { background: #bf360c; }
.initials {
  position: absolute;
  right: 8px;
  bottom: 9px;
  width: 16px;
  height: 16px;
  border-radius: 8px;
  background: #c6d4e6;
  color: #34495e;
  font-size: 8px;
  line-height: 16px;
  font-weight: 600;
}
.tray { display: flex; align-items: center; gap: 14px; margin-left: auto; padding-right: 24px; line-height: 20px; }
.tray button { min-width: 18px; }
.lang, .clock { display: block; text-align: center; }
.cloud { margin: 0 10px 0 8px; }
.status { gap: 10px; margin-left: 8px; }
.clock { text-align: right; margin-left: 7px; }
```
